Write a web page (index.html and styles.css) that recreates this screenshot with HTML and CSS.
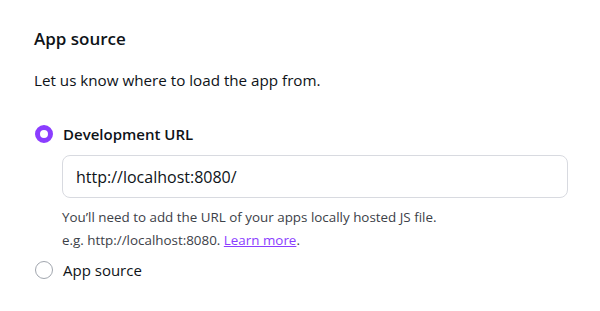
FILE: index.html
```html
<!DOCTYPE html>
<html>
<head>
<meta charset="utf-8">
<link rel="stylesheet" href="styles.css">
</head>
<body>
<div class="panel">
  <h2 class="title">App source</h2>
  <p class="desc">Let us know where to load the app from.</p>
  <div class="options">
    <label class="option">
      <span class="radio checked"></span>
      <span class="opt-label strong">Development URL</span>
    </label>
    <div class="nested">
      <div class="input">http://localhost:8080/</div>
      <p class="help">You’ll need to add the URL of your apps locally hosted JS file.<br>e.g. http://localhost:8080. <a href="#" class="link">Learn more</a>.</p>
    </div>
    <label class="option">
      <span class="radio"></span>
      <span class="opt-label">App source</span>
    </label>
  </div>
</div>
</body>
</html>
```

FILE: styles.css
```css
* { box-sizing: border-box; }
html, body { margin: 0; padding: 0; background: #fff; }
body {
  font-family: "Open Sans", "Noto Sans", sans-serif;
  color: #0e1318;
}
.panel {
  padding: 27px 32px 0 34px;
}
.title {
  margin: 0;
  font-size: 17px;
  font-weight: 600;
  line-height: 24px;
}
.desc {
  margin: 18px 0 0;
  font-size: 15.2px;
  line-height: 22px;
}
.options {
  margin-top: 31px;
}
.option {
  display: flex;
  align-items: center;
  gap: 10px;
  height: 24px;
}
.radio {
  width: 18px;
  height: 18px;
  border-radius: 50%;
  border: 1.5px solid #a1a6ae;
  flex: none;
  margin-left: 1px;
}
.radio.checked {
  border: 5.5px solid #8b3dff;
  background: #fff;
}
.opt-label {
  font-size: 15px;
  line-height: 22px;
}
.opt-label.strong { font-weight: 600; }
.nested {
  padding-left: 28px;
  margin-top: 9px;
}
.input {
  height: 43px;
  border: 1px solid #d8dae0;
  border-radius: 8px;
  padding: 0 13px;
  display: flex;
  align-items: center;
  font-size: 16px;
}
.help {
  margin: 8px 0 6px;
  font-size: 13.4px;
  line-height: 23px;
  color: #3c4148;
}
.link { color: #8b3dff; }
```
